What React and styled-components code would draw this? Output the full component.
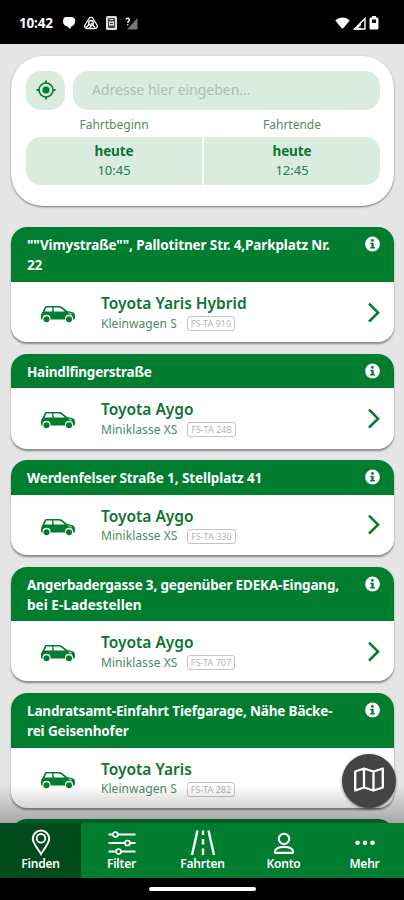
import styled, { createGlobalStyle } from 'styled-components';

const colors = {
    green: '#007d2f',
    darkGreen: '#004a1c',
    text: '#0b7531',
    mint: '#daebe0',
    page: '#e5e5e5',
}

const GlobalStyle = createGlobalStyle`
    * { box-sizing: border-box; }
    body {
        margin: 0;
        overflow: hidden;
        background: ${colors.page};
        font-family: "Noto Sans", "Open Sans", sans-serif;
    }
    svg { display: block; flex: none; }
    `
const Screen = styled.div`
    position: relative;
    display: flex;
    flex-direction: column;
    width: 404px;
    height: 900px;
    overflow: hidden;
    background: ${colors.page};
    `
const StatusBar = styled.div`
    display: flex;
    flex: none;
    align-items: center;
    height: 44px;
    padding: 2px 25px 0 19px;
    background: #000;
    color: #fff;
    `
const Clock = styled.span`
    width: 43px;
    font-size: 13.5px;
    font-weight: 700;
    letter-spacing: -0.2px;
    `
const StatusIcons = styled.div`
    display: flex;
    align-items: center;
    gap: ${props => props.$gap};
    margin-left: ${props => props.$push ? 'auto' : 0};
    `
const Content = styled.main`
    flex: 1;
    min-height: 0;
    padding: 12px 10px 0 11px;
    overflow: hidden;
    `
const SearchCard = styled.section`
    height: 150px;
    padding: 15px 14px 0 15px;
    border-radius: 32px;
    background: #fff;
    box-shadow: 0 1px 2px rgba(0, 0, 0, 0.5);
    `
const SearchRow = styled.div`
    display: flex;
    gap: 8px;
    height: 39px;
    `
const LocateButton = styled.button`
    display: flex;
    align-items: center;
    justify-content: center;
    width: 39px;
    padding: 0 0 1px;
    border: 0;
    border-radius: 15px;
    background: ${colors.mint};
    `
const AddressField = styled.div`
    flex: 1;
    padding-left: 19px;
    border-radius: 15px;
    background: ${colors.mint};
    color: #a9bfb2;
    font-size: 14px;
    line-height: 38px;
    `
const TimeGrid = styled.div`
    display: grid;
    grid-template-columns: 1fr 1fr;
    column-gap: 2px;
    text-align: center;
    `
const TimeLabel = styled.div`
    height: 27px;
    color: #4f8b68;
    font-size: 12px;
    line-height: 29px;
    `
const TimeBox = styled.div`
    height: 48px;
    padding-top: 5px;
    border-radius: ${props => props.$end ? '0 15px 15px 0' : '15px 0 0 15px'};
    background: ${colors.mint};
    color: #29794a;
    font-size: 13px;
    line-height: 19px;
    `
const Day = styled.div`
    color: ${colors.text};
    font-size: 13.5px;
    font-weight: 700;
    letter-spacing: -0.1px;
    `
const StationList = styled.div`
    display: flex;
    flex-direction: column;
    gap: 11.5px;
    margin-top: 21.4px;
    `
const Station = styled.article`
    flex: none;
    overflow: hidden;
    border-radius: 16px;
    background: #fff;
    box-shadow: 0 1.5px 2px rgba(0, 0, 0, 0.4);
    `
const StationHeader = styled.header`
    display: flex;
    justify-content: space-between;
    padding: 8px 14.5px 6.6px 16px;
    background: ${colors.green};
    color: #fff;
    font-size: 13.5px;
    font-weight: 700;
    line-height: 20px;
    `
const HeaderLine = styled.div`
    height: 20px;
    white-space: nowrap;
    letter-spacing: ${props => props.$spacing}px;
    `
const CarRow = styled.div`
    display: flex;
    align-items: center;
    height: 60.3px;
    padding: 0.8px 13px 0 29px;
    `
const CarText = styled.div`
    flex: 1;
    margin-left: 26px;
    `
const CarName = styled.div`
    color: ${colors.text};
    font-size: 15.5px;
    font-weight: 600;
    line-height: 21px;
    `
const CarClass = styled.div`
    display: flex;
    align-items: center;
    height: 18px;
    color: #4a8c66;
    font-size: 12px;
    letter-spacing: 0.05px;
    `
const ClassName = styled.span`
    width: 86px;
    white-space: nowrap;
    `
const Plate = styled.span`
    width: ${props => props.$width}px;
    height: 15px;
    margin-top: 1px;
    border: 1px solid #c4c4c4;
    border-radius: 3px;
    color: #b5b5b5;
    font-size: 9px;
    line-height: 13px;
    text-align: center;
    white-space: nowrap;
    `
const Fade = styled.div`
    position: absolute;
    right: 0;
    bottom: 77px;
    left: 0;
    height: 38px;
    background: linear-gradient(rgba(0, 0, 0, 0), rgba(0, 0, 0, 0.27));
    `
const MapButton = styled.button`
    position: absolute;
    right: 8px;
    bottom: 92px;
    display: flex;
    align-items: center;
    justify-content: center;
    width: 54px;
    height: 54px;
    padding: 0 0 2px;
    border: 0;
    border-radius: 50%;
    background: #444;
    box-shadow: 0 1px 3px rgba(0, 0, 0, 0.5);
    `
const TabBar = styled.nav`
    position: relative;
    display: grid;
    flex: none;
    grid-template-columns: repeat(5, 81px);
    height: 55px;
    background: ${colors.green};
    `
const Tab = styled.a`
    display: flex;
    flex-direction: column;
    align-items: center;
    padding-top: 6px;
    background: ${props => props.$active ? colors.darkGreen : 'transparent'};
    color: #fff;
    font-size: 12px;
    font-weight: 600;
    line-height: 16px;
    letter-spacing: -0.2px;
    `
const TabLabel = styled.span`
    margin-top: 0.5px;
    `
const HomeBar = styled.div`
    display: flex;
    flex: none;
    justify-content: center;
    height: 22.5px;
    padding-top: 9px;
    background: #000;
    `
const HomePill = styled.div`
    width: 107px;
    height: 4.5px;
    border-radius: 3px;
    background: #fff;
    `

const ChatIcon = () => (
    <svg width="14" height="14" viewBox="0 0 14 14" fill="#fff">
        <path d="M4 1h6a3.500 3.500 0 0 1 3 4.500C13 8 11.500 10 9.500 10.200L8 13 5.500 10.500C2.500 10 1 8 1 5.500 1 3 2 1 4 1z" />
    </svg>
)
const TriangleIcon = () => (
    <svg width="14" height="14" viewBox="0 0 14 14" fill="none" stroke="#fff" strokeWidth="1.300">
        <path d="M5 2.500a2.300 2.300 0 0 1 4 0l4 6.500a2.300 2.300 0 0 1-2 3.500H3A2.300 2.300 0 0 1 1 9z" />
        <circle cx="7" cy="6.800" r="2.300" />
        <path d="M2 11.500 5.500 8M7 7l4 4.500M5 12.500l2.500-3" />
    </svg>
)
const CardIcon = () => (
    <svg width="11" height="14" viewBox="0 0 11 14">
        <rect width="11" height="14" rx="1.500" fill="#ddd" />
        <rect x="2" y="2" width="7" height="10" rx="1" fill="#444" />
        <path d="M3 5.500h5v4H3zM3.500 3h4v1h-4z" fill="#ddd" />
        <path d="M4 7h3v1H4z" fill="#333" />
    </svg>
)
const NoSignalIcon = () => (
    <svg width="13" height="13" viewBox="0 0 13 13">
        <path d="M12.500 1v11.500H2z" fill="#777" />
        <path d="M1 2.500C1.500.8 4.500.8 4.300 3c-.1 1.200-1.500 1.400-1.500 3" fill="none" stroke="#fff" strokeWidth="1.400" />
        <circle cx="2.800" cy="7.800" r=".8" fill="#fff" />
    </svg>
)
const WifiIcon = () => (
    <svg width="15" height="12" viewBox="0 0 15 12" fill="#fff">
        <path d="M.3 3.500C4-.6 11-.6 14.700 3.500L8.300 11.200q-.8.800-1.600 0z" />
    </svg>
)
const SignalIcon = () => (
    <svg width="13" height="13" viewBox="0 0 13 13">
        <path d="M12 1.500v10.500H1.500z" fill="none" stroke="#fff" strokeWidth="1.400" />
        <path d="M1 12.500 8 5.500v7z" fill="#fff" />
        <path d="M5 11 8 8v3z" fill="#333" />
    </svg>
)
const BatteryIcon = () => (
    <svg width="10" height="14" viewBox="0 0 10 14">
        <path d="M3 1.500V0h4v1.500h1A1.500 1.500 0 0 1 9.500 3v9A1.500 1.500 0 0 1 8 13.500H2A1.500 1.500 0 0 1 .5 12V3A1.500 1.500 0 0 1 2 1.500z" fill="#fff" />
        <rect x="3" y="3.500" width="4" height="3.500" fill="#111" />
    </svg>
)
const LocateIcon = () => (
    <svg width="20" height="20" viewBox="0 0 20 20" fill="none" stroke={colors.green}>
        <circle cx="10" cy="10" r="7" strokeWidth="1.600" />
        <circle cx="10" cy="10" r="3.500" fill={colors.green} stroke="none" />
        <path d="M10 .5V3M10 17v2.500M.5 10H3M17 10h2.500" strokeWidth="1.800" />
    </svg>
)
const InfoIcon = () => (
    <svg width="15" height="20" viewBox="0 0 15 20">
        <circle cx="7.500" cy="9" r="7.400" fill="#fff" />
        <circle cx="7.400" cy="5.400" r="1.400" fill={colors.green} />
        <path d="M5.300 7.700h3.400v4.200h1.200v1.500H5.200v-1.500h1.200V9.200H5.300z" fill={colors.green} />
    </svg>
)
const CarIcon = () => (
    <svg width="35" height="23" viewBox="0 0 35 23">
        <path d="M4.600 6.500C5 5.400 5.600 5 6.600 5h12.400c1.300 0 2.200.3 3.100.9l5.100 4.100c3.600.5 6.100 1 7.100 2.600.7 1.200.9 3.200.7 4.600-.2.900-.8 1.300-1.700 1.300H2.300c-.8 0-1.300-.4-1.300-1.200-.1-2 .1-4.400 1-5.700.8-.9 1.600-2.900 2.600-5.100z" fill={colors.green} />
        <path d="M6.400 6.400h5.800v4.200H4.600zM13.400 6.400h5.200c1 0 1.600.2 2.300.8l3.500 2.700c.5.400.3.700-.3.700H13.900z" fill="#fff" />
        <circle cx="6.500" cy="17.800" r="4" fill="#fff" />
        <circle cx="29" cy="17.800" r="4" fill="#fff" />
        <circle cx="6.500" cy="18.300" r="3" fill={colors.green} />
        <circle cx="29" cy="18.300" r="3" fill={colors.green} />
        <path d="M28.500 11.900l3.300 1.200" stroke="#fff" strokeWidth=".8" />
    </svg>
)
const ChevronIcon = () => (
    <svg width="14" height="22" viewBox="0 0 14 22" fill="none" stroke={colors.green} strokeWidth="2.600">
        <path d="M2 1.700l9 9-9 9" />
    </svg>
)
const MapIcon = () => (
    <svg width="30" height="26" viewBox="0 0 30 26" fill="none" stroke="#fff" strokeWidth="2.300" strokeLinejoin="round">
        <path d="M1.200 4.500 10 1.500l9.500 3 9.300-3v19l-9.300 3-9.500-3-8.800 3zM10 1.500v19M19.500 4.500v19" />
    </svg>
)
const PinIcon = () => (
    <svg width="20" height="27" viewBox="0 0 20 27" fill="none" stroke="#fff" strokeWidth="2">
        <path d="M10 25C7.500 20.500 1.800 14.500 1.800 9.800a8.200 8.200 0 0 1 16.400 0c0 4.700-5.700 10.700-8.200 15.200z" />
        <circle cx="10" cy="9.300" r="4.300" strokeWidth="1.800" />
    </svg>
)
const FilterIcon = () => (
    <svg width="28" height="27" viewBox="0 0 28 27" fill="none" stroke="#fff" strokeWidth="2">
        <path d="M.5 5.500h4M10 5.500h17.500M.5 14h16M22.500 14h5M.5 22.500h7M13.500 22.500h14" />
        <circle cx="7.300" cy="5.500" r="2.500" strokeWidth="1.700" />
        <circle cx="19.500" cy="14" r="2.500" strokeWidth="1.700" />
        <circle cx="10.500" cy="22.500" r="2.500" strokeWidth="1.700" />
    </svg>
)
const RoadIcon = () => (
    <svg width="26" height="27" viewBox="0 0 26 27" fill="none" stroke="#fff" strokeWidth="2.400">
        <path d="M7.500 1.500 2 26M18.500 1.500 24 26M13 1.500v4.500M13 10v5.500M13 19.500V26" />
    </svg>
)
const UserIcon = () => (
    <svg width="22" height="27" viewBox="0 0 22 27" fill="none" stroke="#fff" strokeWidth="2.100">
        <circle cx="11" cy="9.900" r="5.200" />
        <path d="M2 23.900v-1C2 19.700 6 18 11 18s9 1.700 9 4.900v1z" strokeLinejoin="round" />
    </svg>
)
const MoreIcon = () => (
    <svg width="22" height="27" viewBox="0 0 22 27" fill="#fff">
        <circle cx="3.500" cy="13.800" r="2.300" />
        <circle cx="11" cy="13.800" r="2.300" />
        <circle cx="18.500" cy="13.800" r="2.300" />
    </svg>
)

// each header line carries its own letter spacing
const stations = [
    { lines: [['""Vimystraße"", Pallotitner Str. 4,Parkplatz Nr.', -0.12], ['22', -0.2]], car: 'Toyota Yaris Hybrid', type: 'Kleinwagen S', plate: 'FS-TA 919', plateWidth: 48 },
    { lines: [['Haindlfingerstraße', -0.22]], car: 'Toyota Aygo', type: 'Miniklasse XS', plate: 'FS-TA 248', plateWidth: 49 },
    { lines: [['Werdenfelser Straße 1, Stellplatz 41', -0.09]], car: 'Toyota Aygo', type: 'Miniklasse XS', plate: 'FS-TA 330', plateWidth: 49 },
    { lines: [['Angerbadergasse 3, gegenüber EDEKA-Eingang,', -0.17], ['bei E-Ladestellen', 0.05]], car: 'Toyota Aygo', type: 'Miniklasse XS', plate: 'FS-TA 707', plateWidth: 48 },
    { lines: [['Landratsamt-Einfahrt Tiefgarage, Nähe Bäcke-', -0.16], ['rei Geisenhofer', -0.12]], car: 'Toyota Yaris', type: 'Kleinwagen S', plate: 'FS-TA 282', plateWidth: 48 },
    { lines: [['', 0]], car: '', type: '', plate: '' },
]

const tabs = [
    { label: 'Finden', Icon: PinIcon, active: true },
    { label: 'Filter', Icon: FilterIcon },
    { label: 'Fahrten', Icon: RoadIcon },
    { label: 'Konto', Icon: UserIcon },
    { label: 'Mehr', Icon: MoreIcon },
]

const StationCard = ({ lines, car, type, plate, plateWidth }) => (
    <Station>
        <StationHeader>
            <div>
                {lines.map(([text, spacing]) => (
                    <HeaderLine key={text} $spacing={spacing}>{text}</HeaderLine>
                ))}
            </div>
            <InfoIcon />
        </StationHeader>
        <CarRow>
            <CarIcon />
            <CarText>
                <CarName>{car}</CarName>
                <CarClass>
                    <ClassName>{type}</ClassName>
                    {plate && <Plate $width={plateWidth}>{plate}</Plate>}
                </CarClass>
            </CarText>
            <ChevronIcon />
        </CarRow>
    </Station>
)

const App = () => {
    return (
        <Screen>
            <GlobalStyle />
            <StatusBar>
                <Clock>10:42</Clock>
                <StatusIcons $gap="8px">
                    <ChatIcon />
                    <TriangleIcon />
                    <CardIcon />
                    <NoSignalIcon />
                </StatusIcons>
                <StatusIcons $gap="3px" $push>
                    <WifiIcon />
                    <SignalIcon />
                    <BatteryIcon />
                </StatusIcons>
            </StatusBar>
            <Content>
                <SearchCard>
                    <SearchRow>
                        <LocateButton><LocateIcon /></LocateButton>
                        <AddressField>Adresse hier eingeben...</AddressField>
                    </SearchRow>
                    <TimeGrid>
                        <TimeLabel>Fahrtbeginn</TimeLabel>
                        <TimeLabel>Fahrtende</TimeLabel>
                        <TimeBox>
                            <Day>heute</Day>
                            10:45
                        </TimeBox>
                        <TimeBox $end>
                            <Day>heute</Day>
                            12:45
                        </TimeBox>
                    </TimeGrid>
                </SearchCard>
                <StationList>
                    {stations.map(station => <StationCard key={station.plate} {...station} />)}
                </StationList>
            </Content>
            <Fade />
            <MapButton><MapIcon /></MapButton>
            <TabBar>
                {tabs.map(({ label, Icon, active }) => (
                    <Tab key={label} $active={active}>
                        <Icon />
                        <TabLabel>{label}</TabLabel>
                    </Tab>
                ))}
            </TabBar>
            <HomeBar><HomePill /></HomeBar>
        </Screen>
    );
};

export default App;
